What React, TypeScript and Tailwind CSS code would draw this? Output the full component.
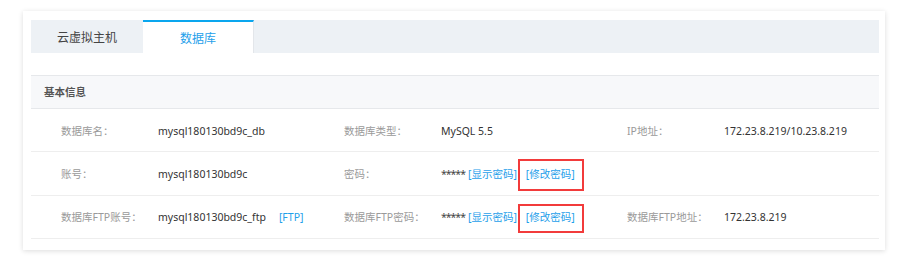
import React from 'react';

const font = { fontFamily: '"Noto Sans", "Noto Sans CJK SC", sans-serif' };

function Label({ children }: { children: React.ReactNode }) {
  return <div className="text-[#9a9a9a]">{children}</div>;
}

function Value({ children }: { children: React.ReactNode }) {
  return <div className="text-[#333] flex items-center">{children}</div>;
}

function Link({ children }: { children: React.ReactNode }) {
  return <span className="text-[#1ea0ea] cursor-pointer">{children}</span>;
}

function Stars() {
  return <span className="mr-[3px] tracking-[-1px] text-[#444]">*****</span>;
}

// red annotation box round the "change password" link
function Marked({ children, h }: { children: React.ReactNode; h: string }) {
  return (
    <span className={`ml-[1px] inline-flex items-center border-2 border-[#f23b3b] pl-[6px] pr-[7px] ${h}`}>
      {children}
    </span>
  );
}

export default function App() {
  return (
    <div className="bg-white w-[899px] h-[264px] pt-[11px] pl-[23px]" style={font}>
      <div className="w-[862px] h-[239px] bg-white shadow-[0_1px_5px_rgba(0,0,0,0.14)] pt-[9px] pl-[8px] pr-[6px]">
        {/* Tabs */}
        <div className="flex h-[33px] bg-[#edf1f5] text-[12px]">
          <div className="w-[112px] flex items-center justify-center text-[#444] pt-[2px]">云虚拟主机</div>
          <div className="w-[111px] flex items-center justify-center bg-white border-t-2 border-[#0aa6ee] border-r border-r-[#e3e6ea] text-[#1ea0ea] pt-[2px]">
            数据库
          </div>
        </div>

        {/* Section */}
        <div className="mt-[22px]">
          <div className="h-[34px] bg-[#f7f8fa] border-y border-[#e6e8eb] flex items-center pl-[13px] pt-[1px] text-[10.5px] font-bold text-[#555]">
            基本信息
          </div>

          <div className="text-[10.5px]">
            <div className="h-[43px] pt-[3px] border-b border-[#eeeeee] grid grid-cols-[97px_186px_97px_186px_97px_1fr] items-center pl-[30px]">
              <Label>数据库名：</Label>
              <Value>mysql180130bd9c_db</Value>
              <Label>数据库类型：</Label>
              <Value>MySQL 5.5</Value>
              <Label>IP地址：</Label>
              <Value>172.23.8.219/10.23.8.219</Value>
            </div>

            <div className="h-[44px] pt-[2px] border-b border-[#eeeeee] grid grid-cols-[97px_186px_97px_186px_97px_1fr] items-center pl-[30px]">
              <Label>账号：</Label>
              <Value>mysql180130bd9c</Value>
              <Label>密码：</Label>
              <Value>
                <Stars />
                <Link>[显示密码]</Link>
                <Marked h="h-[32px]">
                  <Link>[修改密码]</Link>
                </Marked>
              </Value>
              <div />
              <div />
            </div>

            <div className="h-[43px] pt-[2px] border-b border-[#eeeeee] grid grid-cols-[97px_186px_97px_186px_97px_1fr] items-center pl-[30px]">
              <Label>数据库FTP账号：</Label>
              <Value>
                mysql180130bd9c_ftp
                <span className="ml-[13px]">
                  <Link>[FTP]</Link>
                </span>
              </Value>
              <Label>数据库FTP密码：</Label>
              <Value>
                <Stars />
                <Link>[显示密码]</Link>
                <Marked h="h-[29px]">
                  <Link>[修改密码]</Link>
                </Marked>
              </Value>
              <Label>数据库FTP地址：</Label>
              <Value>172.23.8.219</Value>
            </div>
          </div>
        </div>
      </div>
    </div>
  );
}
